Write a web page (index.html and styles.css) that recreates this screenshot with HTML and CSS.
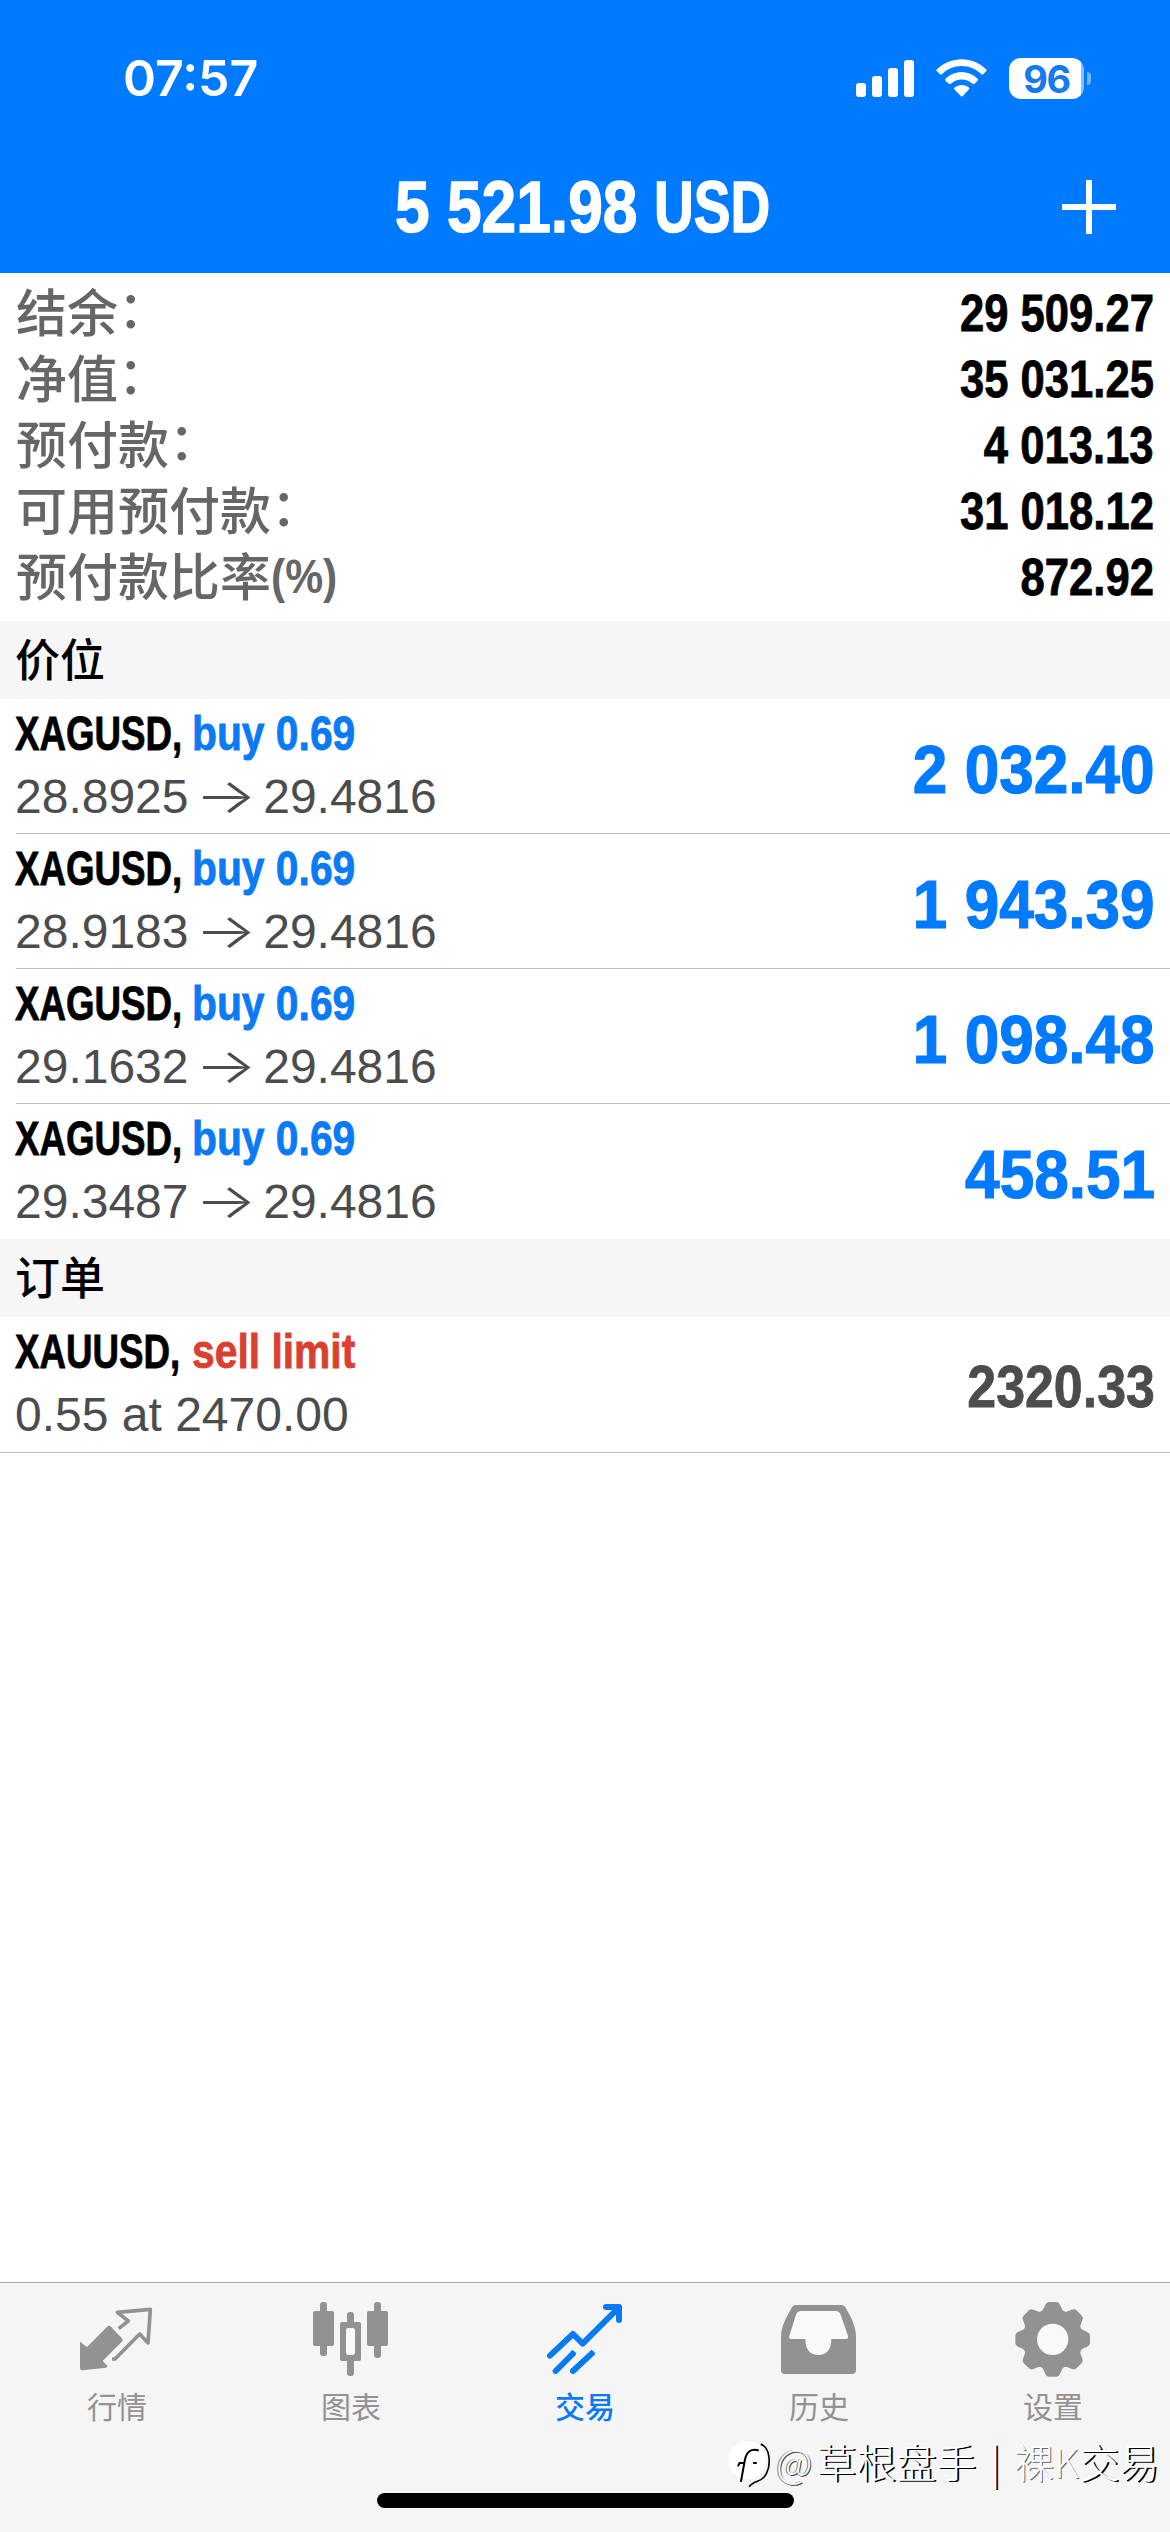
FILE: index.html
```html
<!DOCTYPE html>
<html lang="zh-CN">
<head>
<meta charset="utf-8">
<title>交易</title>
<link rel="stylesheet" href="styles.css">
</head>
<body>
<div class="screen">
  <header class="header">
    <div class="status">
      <span class="time">07:57</span>
      <div class="indicators">
        <svg class="signal" viewBox="0 0 58 37" width="58" height="37">
          <rect x="0" y="23" width="10" height="14" rx="3"/>
          <rect x="16" y="16" width="10" height="21" rx="3"/>
          <rect x="32" y="8" width="10" height="29" rx="3"/>
          <rect x="48" y="0" width="10" height="37" rx="3"/>
        </svg>
        <svg class="wifi" viewBox="348 86 152 113" width="51" height="38">
          <path d="M350 117C392 76 458 76 498 117Q500 120 498 122L489 131Q486 133 483 131C450 99 398 99 366 131Q363 133 360 131L350 122Q348 120 350 117Z"/>
          <path d="M376 145C404 118 445 118 472 145Q475 148 472 151L463 160Q460 162 457 160C438 143 411 143 392 160Q389 162 386 160L376 151Q374 148 376 145Z"/>
          <path d="M403 171C416 161 434 161 446 171Q449 174 446 177L428 196Q425 199 422 196L403 177Q400 174 403 171Z"/>
        </svg>
        <div class="battery"><span class="level">96</span></div>
      </div>
    </div>
    <div class="nav">
      <h1 class="title"><span class="amount">5 521.98</span><span class="currency">USD</span></h1>
      <svg class="add" viewBox="0 0 54 54" width="54" height="54"><path d="M27 0V54M0 27H54"/></svg>
    </div>
  </header>

  <main class="content">
    <dl class="summary">
      <div class="line"><dt>结余<i>：</i></dt><dd>29 509.27</dd></div>
      <div class="line"><dt>净值<i>：</i></dt><dd>35 031.25</dd></div>
      <div class="line"><dt>预付款<i>：</i></dt><dd>4 013.13</dd></div>
      <div class="line"><dt>可用预付款<i>：</i></dt><dd>31 018.12</dd></div>
      <div class="line"><dt>预付款比率<b>(%)</b></dt><dd>872.92</dd></div>
    </dl>

    <h2 class="section">价位</h2>
    <ul class="list">
      <li class="row">
        <div class="info">
          <p class="head"><span class="symbol">XAGUSD,</span><span class="side buy">buy 0.69</span></p>
          <p class="detail">28.8925 <span class="arrow">→</span> 29.4816</p>
        </div>
        <span class="profit">2 032.40</span>
      </li>
      <li class="row">
        <div class="info">
          <p class="head"><span class="symbol">XAGUSD,</span><span class="side buy">buy 0.69</span></p>
          <p class="detail">28.9183 <span class="arrow">→</span> 29.4816</p>
        </div>
        <span class="profit">1 943.39</span>
      </li>
      <li class="row">
        <div class="info">
          <p class="head"><span class="symbol">XAGUSD,</span><span class="side buy">buy 0.69</span></p>
          <p class="detail">29.1632 <span class="arrow">→</span> 29.4816</p>
        </div>
        <span class="profit">1 098.48</span>
      </li>
      <li class="row">
        <div class="info">
          <p class="head"><span class="symbol">XAGUSD,</span><span class="side buy">buy 0.69</span></p>
          <p class="detail">29.3487 <span class="arrow">→</span> 29.4816</p>
        </div>
        <span class="profit">458.51</span>
      </li>
    </ul>

    <h2 class="section">订单</h2>
    <ul class="list orders">
      <li class="row">
        <div class="info">
          <p class="head"><span class="symbol">XAUUSD,</span><span class="side sell">sell limit</span></p>
          <p class="detail">0.55 at 2470.00</p>
        </div>
        <span class="price">2320.33</span>
      </li>
    </ul>
  </main>

  <nav class="tabs">
    <a class="tab">
      <svg viewBox="111 90 240 240" width="80" height="80">
        <path class="fill" d="M120 215L141 231L203 169Q208 165 213 170L247 206Q250 210 247 214L188 273L203 289Q202 292 198 293L128 301Q120 302 120 294Z"/>
        <path class="line-icon" d="M236 176L265 153L232 127L331 118L324 219L299 192L225 267H216"/>
      </svg>
      <span>行情</span>
    </a>
    <a class="tab">
      <svg viewBox="813 90 240 240" width="80" height="80">
        <g class="fill">
          <rect x="840" y="96" width="21" height="162" rx="9"/><rect x="819" y="123" width="63" height="105" rx="6"/>
          <rect x="1002" y="96" width="21" height="168" rx="9"/><rect x="981" y="123" width="63" height="105" rx="6"/>
          <rect x="921" y="126" width="21" height="192" rx="9"/><rect x="900" y="156" width="63" height="117" rx="6"/>
        </g>
        <rect class="hole" x="918" y="174" width="27" height="81" rx="7"/>
      </svg>
      <span>图表</span>
    </a>
    <a class="tab active">
      <svg viewBox="135 90 240 240" width="80" height="80">
        <path class="trend" d="M150 257L219 192L248 221L357 112M318 111H357V150"/>
        <path class="trend" d="M167 303L218 252M219 303L275 251"/>
        <path class="fill" d="M211 245L218 240L229 250L222 257ZM268 245L275 240L286 250L279 257Z"/>
      </svg>
      <span>交易</span>
    </a>
    <a class="tab">
      <svg viewBox="837 90 240 240" width="80" height="80">
        <path class="fill" d="M888 105H1024Q1032 105 1036 112C1055 145 1068 168 1068 202V300Q1068 312 1056 312H855Q843 312 843 300V202C843 168 858 145 876 112Q880 105 888 105Z"/>
        <path class="hole" d="M903 123H1007Q1018 123 1022 134L1044 198Q1046 207 1038 207H994C994 235 982 255 955 255S916 235 916 207H874Q865 207 868 198L888 134Q892 123 903 123Z"/>
      </svg>
      <span>历史</span>
    </a>
    <a class="tab">
      <svg viewBox="159 90 240 240" width="80" height="80">
        <defs><path id="tooth" d="M240 128Q248 124 251 115L256 104Q259 96 267 96H289Q297 96 300 104L305 115Q308 124 316 128L278 160Z"/></defs>
        <g class="fill">
          <circle cx="278" cy="208" r="91"/>
          <use href="#tooth"/>
          <use href="#tooth" transform="rotate(45 278 208)"/>
          <use href="#tooth" transform="rotate(90 278 208)"/>
          <use href="#tooth" transform="rotate(135 278 208)"/>
          <use href="#tooth" transform="rotate(180 278 208)"/>
          <use href="#tooth" transform="rotate(225 278 208)"/>
          <use href="#tooth" transform="rotate(270 278 208)"/>
          <use href="#tooth" transform="rotate(315 278 208)"/>
        </g>
        <circle class="hole" cx="278" cy="208" r="47"/>
      </svg>
      <span>设置</span>
    </a>
  </nav>

  <div class="home-bar"></div>

  <div class="watermark">
    <svg viewBox="84 104 130 144" width="43" height="48">
      <circle cx="143" cy="164" r="57" fill="#fff"/>
      <path d="M183 116C212 126 214 178 200 205C186 236 162 222 148 245" fill="none" stroke="#000" stroke-width="5"/>
      <path d="M123 230L135 164C140 138 154 129 177 135M114 183L119 173H135M160 173H171" fill="none" stroke="#000" stroke-width="6"/>
    </svg>
    <span class="handle">@</span><span>草根盘手</span><span class="bar">|</span><span class="soft">裸K</span><span>交易</span>
  </div>
</div>
</body>
</html>
```
FILE: styles.css
```css
* { box-sizing: border-box; margin: 0; padding: 0; }

body {
  width: 1170px;
  background: #fff;
  font-family: "Liberation Sans", "Noto Sans CJK SC", sans-serif;
}

.screen {
  position: relative;
  display: flex;
  flex-direction: column;
  height: 2532px;
  overflow: hidden;
}

.header {
  height: 273px;
  background: #007aff;
  color: #fff;
}

.status {
  display: flex;
  align-items: center;
  justify-content: space-between;
  height: 156px;
  padding: 0 79px 0 123px;
}

.time {
  font: 600 50px/60px Inter, sans-serif;
}

.indicators {
  display: flex;
  align-items: center;
  fill: #fff;
}

.wifi { margin-left: 22px; }

.battery {
  position: relative;
  width: 75px;
  height: 41px;
  margin: 0 7px 0 22px;
  border-radius: 12px;
  background: linear-gradient(90deg, #fff 72px, #86bcff 72px);
  text-align: center;
}

.battery::after {
  content: "";
  position: absolute;
  right: -7px;
  top: 14px;
  width: 4px;
  height: 13px;
  border-radius: 0 4px 4px 0;
  background: #74b4ff;
}

.level {
  display: block;
  font: 700 38px/42px Inter, sans-serif;
  color: #1679ec;
  letter-spacing: -1.5px;
}

.nav {
  display: grid;
  grid-template-columns: 1fr 380px 1fr;
  align-items: center;
  height: 100px;
  padding: 0 54px;
}

.title {
  grid-column: 2;
  display: flex;
  font-size: 72px;
  line-height: 102px;
  white-space: nowrap;
  -webkit-text-stroke: 1.4px currentColor;
}

.amount { width: 259px; transform: scaleX(0.865); transform-origin: left; }
.currency { width: 121px; transform: scaleX(0.765); transform-origin: left; }

.add {
  justify-self: end;
  stroke: #fff;
  stroke-width: 6;
}

.content { flex: 1; }

.summary {
  height: 348px;
  padding: 7px 16px 0;
}

.line {
  display: flex;
  justify-content: space-between;
  height: 66px;
  line-height: 66px;
}

.line dt {
  font-family: "Noto Sans CJK SC", sans-serif;
  font-weight: 500;
  font-size: 51px;
  line-height: 60px;
  color: #666;
  display: flex;
}

.line i { font-style: normal; line-height: 53px; }

.line b {
  font: bold 49px/64px "Liberation Sans", sans-serif;
  transform: scaleX(0.87);
  transform-origin: left;
}

.line dd {
  font-weight: bold;
  font-size: 51px;
  line-height: 67px;
  color: #000;
  transform: scaleX(0.855);
  transform-origin: right;
  -webkit-text-stroke: 0.8px currentColor;
}

.section {
  height: 78px;
  padding-left: 15px;
  background: #f6f6f6;
  font: 500 45px/74px "Noto Sans CJK SC", sans-serif;
  color: #000;
}

.list { list-style: none; }

.row {
  position: relative;
  display: flex;
  justify-content: space-between;
  height: 135px;
  padding: 0 15px;
}

.row:not(:last-child)::after,
.orders .row::after {
  content: "";
  position: absolute;
  left: 16px;
  right: 0;
  bottom: 0;
  height: 1px;
  background: #bdbdbf;
}

.orders .row { height: 136px; }
.orders .row::after { left: 0; }

.head {
  display: flex;
  height: 64px;
  padding-top: 5px;
  font-size: 48px;
  line-height: 60px;
  font-weight: bold;
  white-space: nowrap;
  -webkit-text-stroke: 0.8px currentColor;
}

.symbol { width: 177px; transform: scaleX(0.765); transform-origin: left; }
.side { transform: scaleX(0.85); transform-origin: left; }
.buy { color: #0a7af5; }
.sell { color: #db3f30; }

.detail {
  font-size: 48px;
  line-height: 67px;
  color: #4c4c4e;
  white-space: nowrap;
}

.arrow {
  display: inline-block;
  width: 48px;
  text-align: center;
  font-family: Inter, sans-serif;
  font-weight: 300;
  line-height: 1;
  transform: scaleX(1.35);
}

.profit {
  font-size: 69px;
  font-weight: bold;
  line-height: 141px;
  color: #007aff;
  transform: scaleX(0.9);
  transform-origin: right;
  -webkit-text-stroke: 1.2px currentColor;
}

.price {
  font-size: 60px;
  font-weight: bold;
  line-height: 140px;
  color: #4c4c4e;
  transform: scaleX(0.865);
  transform-origin: right;
  -webkit-text-stroke: 0.8px currentColor;
}

.tabs {
  display: grid;
  grid-template-columns: repeat(5, 1fr);
  height: 250px;
  padding-top: 17px;
  border-top: 1px solid #a9a9ab;
  background: #f5f5f5;
}

.tab {
  display: flex;
  flex-direction: column;
  align-items: center;
  gap: 5px;
  color: #929292;
  font: 400 30px/40px "Noto Sans CJK SC", sans-serif;
}

.active { color: #087af2; font-weight: 500; }

.fill { fill: currentColor; }
.hole { fill: #f9f9f9; }
.line-icon { fill: none; stroke: currentColor; stroke-width: 11; stroke-linejoin: round; }
.trend { fill: none; stroke: currentColor; stroke-width: 18; stroke-linecap: round; stroke-linejoin: round; }

.home-bar {
  position: absolute;
  left: 377px;
  top: 2493px;
  width: 417px;
  height: 15px;
  border-radius: 8px;
  background: #000;
}

.watermark {
  position: absolute;
  left: 728px;
  top: 2434px;
  display: flex;
  align-items: center;
  height: 60px;
  font: 300 40px/60px "Noto Sans CJK SC", sans-serif;
  color: #fff;
  text-shadow: 2px 1px 0 #000;
  white-space: nowrap;
}

.watermark span { position: relative; top: -3px; }
.watermark .handle { margin-left: 5px; width: 40px; text-shadow: 1px 1px 0 #444, -1px 0 0 #777; }
.watermark .bar { width: 38px; text-align: center; }
.watermark .soft { text-shadow: 1px 1px 0 #666; }
```
